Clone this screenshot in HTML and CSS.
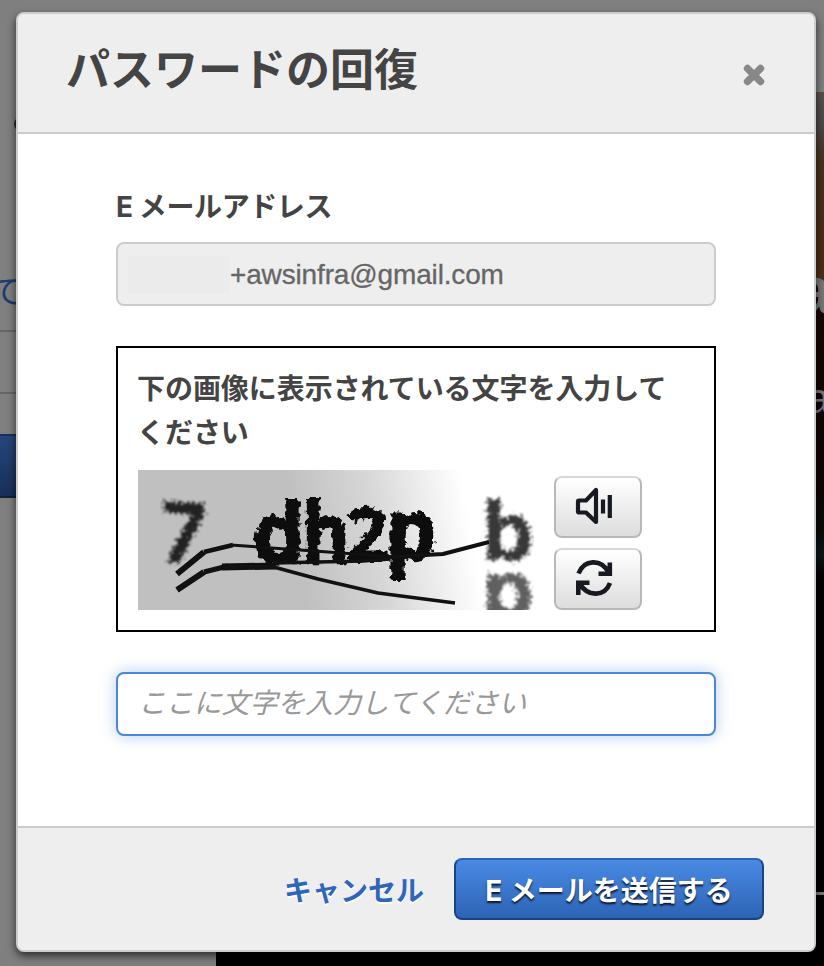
FILE: index.html
```html
<!DOCTYPE html>
<html lang="ja">
<head>
<meta charset="utf-8">
<title>パスワードの回復</title>
<link rel="stylesheet" href="styles.css">
</head>
<body>
<svg class="backdrop" width="824" height="966" viewBox="0 0 824 966" aria-hidden="true">
  <defs>
    <linearGradient id="hero" x1="0" y1="0" x2="0" y2="1">
      <stop offset="0" stop-color="#59504d"/>
      <stop offset=".04" stop-color="#4b4848"/>
      <stop offset=".08" stop-color="#49301d"/>
      <stop offset=".2" stop-color="#4c2c13"/>
      <stop offset=".215" stop-color="#4d3119"/>
      <stop offset=".225" stop-color="#1c0506"/>
      <stop offset=".4" stop-color="#120404"/>
      <stop offset=".5" stop-color="#0b0a08"/>
      <stop offset=".53" stop-color="#0d1518"/>
      <stop offset=".56" stop-color="#000"/>
    </linearGradient>
    <linearGradient id="signin" x1="0" y1="0" x2="0" y2="1">
      <stop offset="0" stop-color="#25467a"/>
      <stop offset="1" stop-color="#182f58"/>
    </linearGradient>
  </defs>
  <rect width="824" height="966" fill="#7f7f7f"/>
  <rect x="216" y="92" width="608" height="874" fill="url(#hero)"/>
  <circle cx="21" cy="124" r="7" fill="#222"/>
  <text class="bg-link" x="-10" y="303">て</text>
  <rect y="330" width="20" height="2" fill="#666"/>
  <rect y="392" width="20" height="2" fill="#666"/>
  <rect y="434" width="20" height="64" fill="#15305a"/>
  <rect y="436" width="20" height="60" fill="url(#signin)"/>
  <rect y="496" width="20" height="2" fill="#10213b"/>
  <text class="bg-heading" x="795" y="313">a</text>
  <text class="bg-copy" x="806" y="413">a</text>
  <rect x="812" y="892" width="12" height="3" fill="#777"/>
</svg>
<main class="dialog" role="dialog" aria-labelledby="title">
  <header class="dialog-header">
    <h1 id="title">パスワードの回復</h1>
    <button class="close" type="button" aria-label="閉じる">
      <svg width="22" height="22" viewBox="0 0 22 22"><path d="M4.500 4.500L17.500 17.500M17.500 4.500L4.500 17.500" stroke="#888" stroke-width="7.400" stroke-linecap="round"/></svg>
    </button>
  </header>
  <section class="dialog-body">
    <div class="label">E メールアドレス</div>
    <div class="field readonly"><span class="mask"></span><span class="address">+awsinfra@gmail.com</span></div>
    <div class="challenge">
      <p class="challenge-label">下の画像に表示されている文字を入力してください</p>
      <div class="challenge-row">
        <svg class="challenge-image" width="396" height="140" viewBox="0 0 396 140">
          <defs>
            <linearGradient id="fade" gradientUnits="userSpaceOnUse" x1="155" y1="50" x2="326" y2="20">
              <stop offset="0" stop-color="#c0c0c0"/>
              <stop offset=".45" stop-color="#d6d6d6"/>
              <stop offset="1" stop-color="#fff"/>
            </linearGradient>
            <filter id="rough" x="-10%" y="-10%" width="120%" height="120%">
              <feTurbulence type="fractalNoise" baseFrequency=".16" numOctaves="2" seed="4"/>
              <feDisplacementMap in="SourceGraphic" scale="9" xChannelSelector="R" yChannelSelector="G"/>
              <feGaussianBlur stdDeviation=".6"/>
            </filter>
            <filter id="grain" x="-20%" y="-20%" width="140%" height="140%">
              <feTurbulence type="fractalNoise" baseFrequency=".35" numOctaves="2" seed="8"/>
              <feDisplacementMap in="SourceGraphic" scale="14" xChannelSelector="R" yChannelSelector="G"/>
              <feGaussianBlur stdDeviation="1"/>
            </filter>
          </defs>
          <rect width="396" height="140" fill="url(#fade)"/>
          <g class="glyphs bold" filter="url(#rough)">
            <text x="115" y="93" textLength="52" lengthAdjust="spacingAndGlyphs">d</text>
            <text x="164" y="93" textLength="48" lengthAdjust="spacingAndGlyphs">h</text>
            <text x="209" y="91" textLength="41" lengthAdjust="spacingAndGlyphs" font-size="74">2</text>
            <text x="247" y="90" textLength="52" lengthAdjust="spacingAndGlyphs">p</text>
          </g>
          <g class="glyphs soft" filter="url(#grain)">
            <text x="22" y="93" textLength="46" lengthAdjust="spacingAndGlyphs" transform="rotate(4 45 60)">7</text>
          </g>
          <g class="glyphs pale" filter="url(#grain)">
            <text x="343" y="90" textLength="53" lengthAdjust="spacingAndGlyphs" font-size="80">b</text>
            <text x="343" y="-104" textLength="53" lengthAdjust="spacingAndGlyphs" font-size="80" transform="scale(1 -1)" opacity=".8">b</text>
          </g>
          <g fill="none" stroke="#111" stroke-linejoin="round">
            <path d="M39 104L66 82" stroke-width="6"/>
            <path d="M66 82L95 75" stroke-width="4.5"/>
            <path d="M93 75L190 82L255 87" stroke-width="3"/>
            <path d="M250 87L305 84L351 72" stroke-width="4"/>
            <path d="M39 120L66 102" stroke-width="6"/>
            <path d="M66 102L90 96" stroke-width="5"/>
            <path d="M84 97L138 96" stroke-width="7"/>
            <path d="M135 93L225 91L252 89" stroke-width="3.5"/>
            <path d="M132 96L180 109L240 123L317 133" stroke-width="3.7"/>
          </g>
        </svg>
        <div class="challenge-actions">
          <button class="tool" type="button" aria-label="音声">
            <svg width="40" height="40" viewBox="0 0 40 40"><path d="M21 4V36L11 26.500H4Q3 26.500 3 25.500V15.500Q3 14.500 4 14.500H11Z" fill="none" stroke="#16191f" stroke-width="4.200" stroke-linejoin="round"/><path d="M28 13.500V27.500M34.800 9V32" stroke="#16191f" stroke-width="4.200"/></svg>
          </button>
          <button class="tool" type="button" aria-label="更新">
            <svg width="40" height="40" viewBox="0 0 40 40" fill="none" stroke="#16191f" stroke-width="4.600"><path d="M3.500 15.500C9 1.500 26 0 34 15M34.800 4.500V15.800H23.500M35 25C30 38.500 13 39.500 5 26M3.300 37V24.800H14.500"/></svg>
          </button>
        </div>
      </div>
    </div>
    <input class="field answer" type="text" placeholder="ここに文字を入力してください">
  </section>
  <footer class="dialog-footer">
    <a class="cancel">キャンセル</a>
    <button class="submit" type="button">E メールを送信する</button>
  </footer>
</main>
</body>
</html>
```
FILE: styles.css
```css
* { box-sizing: border-box; }
body {
  margin: 0;
  width: 824px;
  height: 966px;
  overflow: hidden;
  font-family: "Liberation Sans", "Noto Sans CJK JP", sans-serif;
  font-size: 28px;
  color: #444;
}
button { padding: 0; border: 0; background: none; font-family: inherit; }
.backdrop { position: absolute; z-index: -1; top: 0; left: 0; }
.bg-link { font-size: 33px; fill: #1b3d73; }
.bg-heading { font-size: 66px; font-weight: bold; fill: #777; }
.bg-copy { font-size: 43px; fill: #777; }

.dialog {
  display: flex;
  flex-direction: column;
  width: 800px;
  height: 940px;
  margin: 12px 0 0 16px;
  border: 2px solid #ccc;
  border-radius: 8px;
  background: #fff;
  box-shadow: 0 4px 8px rgba(0, 0, 0, .65);
  overflow: hidden;
}
.dialog-header {
  display: flex;
  justify-content: space-between;
  height: 120px;
  padding: 24px 49px 0 48px;
  background: #eee;
  border-bottom: 2px solid #ccc;
}
h1 { margin: 0; font-size: 44px; line-height: 66px; }
.close { display: flex; width: 22px; height: 22px; margin-top: 26px; }
.dialog-body { flex: 1; padding: 52px 98px 0; }
.label {
  margin-bottom: 14px;
  font-family: Inter, "Noto Sans CJK JP", sans-serif;
  font-weight: bold;
  line-height: 42px;
  letter-spacing: -.4px;
}
.field {
  display: flex;
  align-items: center;
  width: 600px;
  height: 64px;
  border: 2px solid #ccc;
  border-radius: 8px;
  font-size: 28px;
}
.readonly { padding-left: 10px; background: #eee; color: #666; letter-spacing: -.15px; }
.address { padding-top: 2px; -webkit-text-stroke: .3px #666; }
.mask { width: 102px; height: 37px; background: #ebebeb; }
.challenge {
  width: 600px;
  height: 286px;
  margin: 40px 0;
  padding: 20px 20px 18px;
  border: 2px solid #000;
}
.challenge-label { margin: 0 -10px 14px -1px; padding-right: 30px; font-weight: bold; line-height: 44px; letter-spacing: -.05px; }
.challenge-row { display: flex; gap: 20px; }
.challenge-image { overflow: hidden; }
.glyphs { font-family: "Open Sans", sans-serif; font-weight: bold; font-size: 84px; fill: #080808; }
.bold { stroke: #080808; stroke-width: 2px; }
.soft { fill: #222; }
.pale { fill: #383838; }
.challenge-actions { display: flex; flex-direction: column; gap: 10px; padding-top: 6px; }
.tool {
  display: flex;
  align-items: center;
  width: 88px;
  height: 62px;
  padding: 0 0 2px 19px;
  border: 2px solid #b8b8b8;
  border-top-color: #d8d8d8;
  border-radius: 8px;
  background: linear-gradient(#fff, #ddd);
}
.answer {
  padding: 0 22px 0 20px;
  border-color: #4a87dd;
  outline: 0;
  background: #fff;
  font-family: inherit;
  letter-spacing: -.15px;
  box-shadow: 0 0 16px rgba(74, 135, 221, .4);
}
.answer::placeholder { color: #999; font-style: italic; opacity: 1; }
.dialog-footer {
  display: flex;
  justify-content: flex-end;
  align-items: center;
  gap: 30px;
  height: 124px;
  padding-right: 50px;
  background: #eee;
  border-top: 2px solid #ccc;
  font-weight: bold;
}
.cancel { padding-bottom: 1px; color: #2e66b9; text-shadow: 0 2px 1px #fff; }
.submit {
  width: 310px;
  height: 62px;
  padding-bottom: 1px;
  border: 2px solid #1a4480;
  border-top-color: #2863b5;
  border-radius: 8px;
  background: linear-gradient(#4a8ae4, #2d64b5);
  color: #fff;
  font-family: Inter, "Noto Sans CJK JP", sans-serif;
  font-size: 28px;
  font-weight: bold;
  text-shadow: 0 2px 2px rgba(0, 0, 0, .8);
}
```
